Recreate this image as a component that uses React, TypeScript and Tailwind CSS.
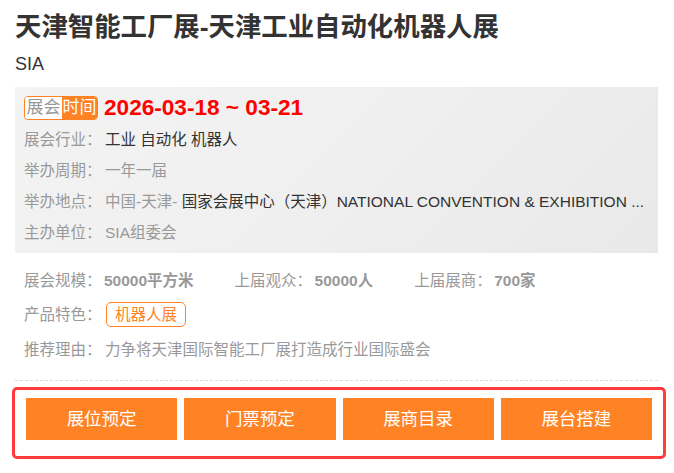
import React from "react";

const font = "font-['Liberation_Sans','Noto_Sans_CJK_SC',sans-serif]";

export default function App() {
  // info rows inside the grey panel
  const rows = [
    { label: "展会行业：", value: <span className="text-[#333]">工业 自动化 机器人</span> },
    { label: "举办周期：", value: <span className="text-[#999]">一年一届</span> },
    {
      label: "举办地点：",
      value: (
        <>
          <span className="text-[#999]">中国-天津- </span>
          <span className="text-[#333]">国家会展中心（天津）NATIONAL CONVENTION &amp; EXHIBITION ...</span>
        </>
      ),
    },
    { label: "主办单位：", value: <span className="text-[#999]">SIA组委会</span> },
  ];

  const stats = [
    { label: "展会规模：", value: "50000平方米" },
    { label: "上届观众：", value: "50000人" },
    { label: "上届展商：", value: "700家" },
  ];

  const buttons = ["展位预定", "门票预定", "展商目录", "展台搭建"];

  return (
    <div className={`${font} w-[674px] h-[473px] bg-white px-[15px] overflow-hidden`}>
      <h1 className="pt-[9px] text-[26.4px] leading-[36px] font-bold text-[#333]">
        天津智能工厂展-天津工业自动化机器人展
      </h1>
      <div className="mt-[6px] text-[18px] leading-[26px] text-[#333]">SIA</div>

      {/* grey info panel */}
      <div className="mt-[10px] w-[643px] h-[166px] pl-[9px] pr-[4px] pt-[9px] bg-[#efefef] bg-[linear-gradient(135deg,#f3f3f3_0%,#f0f0f0_45%,#ececec_75%,#e9e9e9_100%)]">
        <div className="flex items-center h-[24px]">
          <div className="flex h-[24px] w-[74px] rounded-[4px] border border-[#ff8225] overflow-hidden text-[17px] leading-[22px]">
            <span className="w-[37px] bg-white text-[#999] text-center">展会</span>
            <span className="flex-1 bg-[#ff8225] text-white text-center">时间</span>
          </div>
          <span className="ml-[6px] text-[22.6px] font-bold text-[#ff0000] leading-[24px]">2026-03-18 ~ 03-21</span>
        </div>
        <div className="mt-[4px]">
          {rows.map((r) => (
            <div key={r.label} className="flex text-[15.5px] leading-[31px] whitespace-nowrap">
              <span className="w-[81px] shrink-0 text-[#999]">{r.label}</span>
              <span>{r.value}</span>
            </div>
          ))}
        </div>
      </div>

      {/* stats */}
      <div className="pl-[9px] text-[15.5px]">
        <div className="mt-[13px] flex gap-[41px] leading-[30px]">
          {stats.map((s) => (
            <div key={s.label} className="flex">
              <span className="w-[80px] text-[#999]">{s.label}</span>
              <span className="font-bold text-[#999]">{s.value}</span>
            </div>
          ))}
        </div>
        <div className="mt-[6px] flex items-center h-[25px]">
          <span className="w-[82px] text-[#999]">产品特色：</span>
          <span className="h-[25px] px-[8px] rounded-[5px] border border-[#ff8225] text-[#ff8225] leading-[23px]">
            机器人展
          </span>
        </div>
        <div className="mt-[8px] flex leading-[30px]">
          <span className="w-[81px] text-[#999]">推荐理由：</span>
          <span className="text-[#999]">力争将天津国际智能工厂展打造成行业国际盛会</span>
        </div>
      </div>

      <div className="mt-[15px] w-[643px] border-t border-dashed border-[#dcdcdc]" />

      {/* action buttons */}
      <div className="mt-[6px] -ml-[3px] w-[654px] rounded-[5px] border-[3px] border-[#ff3b3b] px-[11px] pt-[8px] pb-[16px]">
        <div className="grid grid-cols-4 gap-[7px]">
          {buttons.map((b) => (
            <div
              key={b}
              className="h-[42px] bg-[#ff8225] text-white text-[17.5px] flex items-center justify-center"
            >
              {b}
            </div>
          ))}
        </div>
      </div>
    </div>
  );
}
